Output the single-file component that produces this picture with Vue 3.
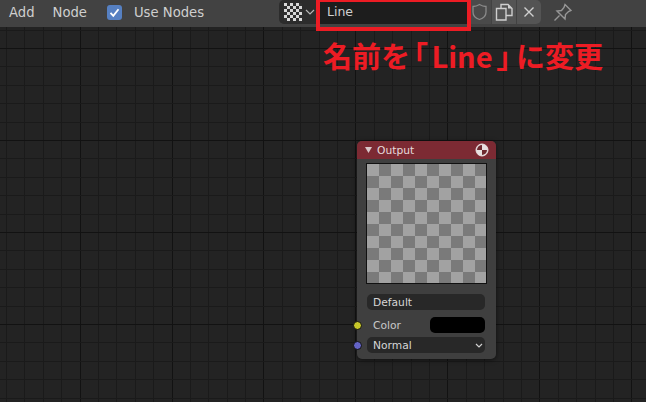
<template>
  <div class="editor">
    <header class="topbar">
      <span class="menu add">Add</span>
      <span class="menu node-menu">Node</span>
      <span class="check">
        <svg width="15" height="15" viewBox="0 0 15 15"><path d="M3.5 7.8 6.3 10.8 11.5 4.2" fill="none" stroke="#fff" stroke-width="1.8" /></svg>
      </span>
      <span class="menu use">Use Nodes</span>
      <div class="tex-group">
        <span class="tex-picker">
          <span class="tex-icon">
            <i v-for="n in 36" :key="n" :class="{ on: (n + Math.floor((n - 1) / 6)) % 2 === 1 }"></i>
          </span>
          <svg width="10" height="6" viewBox="0 0 10 6"><path d="M1 1 5 5 9 1" fill="none" stroke="#b5b5b5" stroke-width="1.2" /></svg>
        </span>
        <span class="name-field">Line</span>
        <span class="btn dim">
          <svg width="17" height="18" viewBox="0 0 17 18"><path d="M8.5 1.5 C6 3 4 3.5 2 3.5 V9 C2 13 5 15.5 8.5 16.5 C12 15.5 15 13 15 9 V3.5 C13 3.5 11 3 8.5 1.5Z" fill="none" stroke="#8a8a8a" stroke-width="1.3" /></svg>
        </span>
        <span class="btn">
          <svg width="18" height="18" viewBox="0 0 18 18">
            <path d="M6 5V1.5H13L17 5.5V12.5H11" fill="none" stroke="#cfcfcf" stroke-width="1.4" />
            <path d="M13 1.5V5.5H17Z" fill="#cfcfcf" />
            <path d="M1.5 5.5H11V17H1.5Z" fill="#545454" stroke="#cfcfcf" stroke-width="1.4" />
          </svg>
        </span>
        <span class="btn last">
          <svg width="12" height="12" viewBox="0 0 12 12"><path d="M1.5 1.5 10.5 10.5M10.5 1.5 1.5 10.5" stroke="#d0d0d0" stroke-width="1.4" /></svg>
        </span>
      </div>
      <svg class="pin" width="20" height="20" viewBox="0 0 20 20"><path d="M13 1.5 19 7.5 16.5 8.5 13.5 11.5 13 16 5 8 9.5 7.5 12 4.500ZM7.500 12.500 2.500 17.500" fill="none" stroke="#979797" stroke-width="1.4" /></svg>
    </header>

    <main class="canvas">
      <svg class="grid" width="646" height="375" viewBox="0 27 646 375" shape-rendering="crispEdges">
        <line v-for="x in gridX" :key="'x' + x.pos" :x1="x.pos" :x2="x.pos" y1="27" y2="402" :stroke="x.major ? '#121212' : '#1a1a1a'" />
        <line v-for="y in gridY" :key="'y' + y.pos" :y1="y.pos" :y2="y.pos" x1="0" x2="646" :stroke="y.major ? '#121212' : '#1a1a1a'" />
      </svg>
      <section class="node">
        <div class="node-head">
          <svg width="7" height="6" viewBox="0 0 7 6"><path d="M0 0H7L3.5 6Z" fill="#d8c8ca" /></svg>
          <span class="node-title">Output</span>
          <svg class="ball" width="14" height="14" viewBox="0 0 14 14">
            <circle cx="7" cy="7" r="6" fill="#e8e0e0" stroke="#e8e0e0" stroke-width="1" />
            <path d="M7 2A5 5 0 0 0 2 7H7Z" fill="#6e2a30" />
            <path d="M7 7H12A5 5 0 0 1 7 12Z" fill="#6e2a30" />
          </svg>
        </div>
        <div class="node-body">
          <div class="preview"></div>
          <div class="field name">Default</div>
          <div class="color-row">
            <span>Color</span>
            <span class="swatch"></span>
            <i class="socket yellow"></i>
          </div>
          <div class="field select">
            <span>Normal</span>
            <svg width="8" height="5" viewBox="0 0 8 5"><path d="M1 1 4 4 7 1" fill="none" stroke="#d0d0d0" stroke-width="1.2" /></svg>
            <i class="socket blue"></i>
          </div>
        </div>
      </section>
    </main>

    <div class="highlight"></div>
    <div class="note">名前を<span class="bracket open">「</span>Line<span class="bracket close">」</span>に変更</div>
  </div>
</template>

<script setup>
// grid step is 18.4px, every 5th line is darker
const step = 18.4
const gridX = []
const gridY = []
for (let i = 0; i < 36; i++) {
  gridX.push({ pos: Math.floor(6.4 + step * i) + 0.5, major: i % 5 === 4 })
}
for (let i = 0; i < 21; i++) {
  gridY.push({ pos: Math.floor(30 + step * i) + 0.5, major: i % 5 === 1 })
}
</script>

<style>
html, body {
  margin: 0;
  background: #232323;
}
</style>

<style scoped>
.editor {
  position: relative;
  width: 646px;
  height: 402px;
  overflow: hidden;
  display: flex;
  flex-direction: column;
  font-family: "DejaVu Sans", sans-serif;
  font-size: 12px;
  color: #d4d4d4;
}
.topbar {
  height: 27px;
  flex: none;
  background: #424242;
  display: flex;
  align-items: center;
  box-sizing: border-box;
}
.menu {
  line-height: 24px;
  margin-top: -2px;
  font-size: 13.2px;
  color: #cfcfcf;
}
.add { margin-left: 9px; }
.node-menu { margin-left: 18px; }
.check {
  width: 15px;
  height: 15px;
  margin-left: 20px;
  margin-top: -2px;
  border-radius: 3px;
  background: #5680c2;
  display: block;
}
.check svg { display: block; }
.use { margin-left: 12px; }
.tex-group {
  position: absolute;
  left: 279px;
  top: 0;
  height: 24px;
  display: flex;
}
.tex-picker {
  width: 41px;
  display: flex;
  align-items: center;
  gap: 3px;
  padding-left: 5px;
  box-sizing: border-box;
  background: #2c2c2c;
  border-radius: 5px 0 0 5px;
}
.tex-icon {
  width: 18px;
  height: 18px;
  display: grid;
  grid-template-columns: repeat(6, 3px);
  grid-auto-rows: 3px;
  flex: none;
}
.tex-icon i { background: #303030; }
.tex-icon i.on { background: #d8d8d8; }
.name-field {
  width: 147px;
  background: #1d1d1d;
  padding-left: 7px;
  box-sizing: border-box;
  line-height: 24px;
  font-size: 12.5px;
  color: #d0d0d0;
}
.btn {
  width: 24px;
  background: #545454;
  margin-right: 1px;
  display: flex;
  align-items: center;
  justify-content: center;
}
.btn.dim { background: #4a4a4a; }
.btn.last { border-radius: 0 5px 5px 0; margin-right: 0; }
.pin {
  position: absolute;
  left: 552px;
  top: 3px;
}
.canvas {
  flex: 1;
  position: relative;
  background: #232323;
}
.grid {
  position: absolute;
  left: 0;
  top: 0;
  display: block;
}
.node {
  position: absolute;
  left: 357px;
  top: 114px;
  width: 139px;
  height: 218px;
  border-radius: 5px;
  background: #3f3f3f;
  box-shadow: 0 1px 5px rgba(0, 0, 0, 0.55);
}
.node-head {
  height: 18px;
  background: #7c2a33;
  border-radius: 5px 5px 0 0;
  display: flex;
  align-items: center;
  padding: 0 7px 0 8px;
  color: #e6dcdc;
}
.node-title {
  margin-left: 5px;
  font-size: 10.7px;
  flex: 1;
}
.ball { display: block; }
.node-body {
  padding: 4px 11px 0 10px;
}
.preview {
  width: 119px;
  height: 119px;
  margin: 0 0 10px -1px;
  border: 1px solid #111;
  background-color: #a2a2a2;
  background-image:
    linear-gradient(45deg, #7a7a7a 25%, transparent 25%, transparent 75%, #7a7a7a 75%),
    linear-gradient(45deg, #7a7a7a 25%, transparent 25%, transparent 75%, #7a7a7a 75%);
  background-size: 24px 24px;
  background-position: 0 0, 12px 12px;
}
.field {
  height: 16px;
  line-height: 18px;
  border-radius: 5px;
  background: #282828;
  padding-left: 6px;
  font-size: 10.7px;
  color: #d6d6d6;
  position: relative;
}
.color-row {
  height: 16px;
  line-height: 18px;
  margin: 7px 0 4px;
  padding-left: 6px;
  font-size: 10.7px;
  color: #c8c8c8;
  position: relative;
}
.swatch {
  position: absolute;
  right: 0;
  top: 0;
  width: 55px;
  height: 16px;
  border-radius: 5px;
  background: #000;
}
.select svg {
  position: absolute;
  right: 2px;
  top: 6px;
}
.socket {
  position: absolute;
  left: -14px;
  top: 4px;
  width: 7px;
  height: 7px;
  border-radius: 50%;
  border: 0.5px solid #111;
}
.yellow { background: #c7c729; }
.blue { background: #6363c7; }
.highlight {
  position: absolute;
  left: 316px;
  top: -2px;
  width: 155px;
  height: 33px;
  box-sizing: border-box;
  border: 4px solid #ed1c24;
}
.note {
  position: absolute;
  left: 323px;
  top: 35px;
  font-family: "Noto Sans CJK JP", sans-serif;
  font-weight: 700;
  font-size: 29px;
  line-height: 40px;
  white-space: nowrap;
  color: #ed1c24;
}
.bracket {
  font-feature-settings: "palt";
}
.open { margin: 0 4px 0 3px; }
.close { margin: 0 5px 0 4px; }
</style>
